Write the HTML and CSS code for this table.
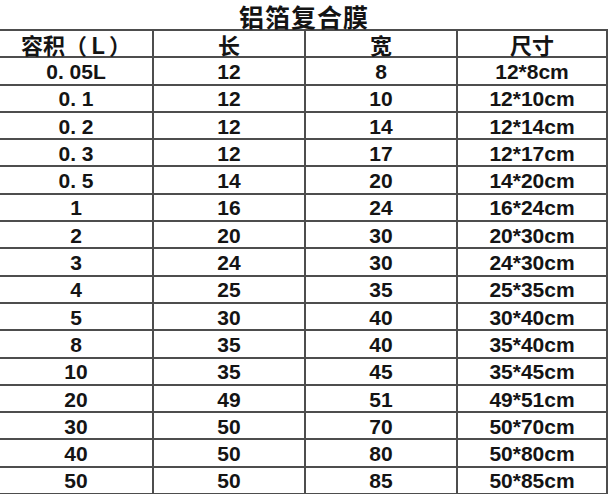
FILE: index.html
```html
<!DOCTYPE html>
<html lang="zh">
<head>
<meta charset="utf-8">
<title>铝箔复合膜</title>
<link rel="stylesheet" href="styles.css">
</head>
<body>
<div class="sheet">
  <div class="title">铝箔复合膜</div>
  <div class="grid">
    <div class="c h">容积（Ｌ）</div><div class="c h">长</div><div class="c h">宽</div><div class="c h">尺寸</div>
    <div class="c">0. 05L</div><div class="c">12</div><div class="c">8</div><div class="c">12*8cm</div>
    <div class="c">0. 1</div><div class="c">12</div><div class="c">10</div><div class="c">12*10cm</div>
    <div class="c">0. 2</div><div class="c">12</div><div class="c">14</div><div class="c">12*14cm</div>
    <div class="c">0. 3</div><div class="c">12</div><div class="c">17</div><div class="c">12*17cm</div>
    <div class="c">0. 5</div><div class="c">14</div><div class="c">20</div><div class="c">14*20cm</div>
    <div class="c">1</div><div class="c">16</div><div class="c">24</div><div class="c">16*24cm</div>
    <div class="c">2</div><div class="c">20</div><div class="c">30</div><div class="c">20*30cm</div>
    <div class="c">3</div><div class="c">24</div><div class="c">30</div><div class="c">24*30cm</div>
    <div class="c">4</div><div class="c">25</div><div class="c">35</div><div class="c">25*35cm</div>
    <div class="c">5</div><div class="c">30</div><div class="c">40</div><div class="c">30*40cm</div>
    <div class="c">8</div><div class="c">35</div><div class="c">40</div><div class="c">35*40cm</div>
    <div class="c">10</div><div class="c">35</div><div class="c">45</div><div class="c">35*45cm</div>
    <div class="c">20</div><div class="c">49</div><div class="c">51</div><div class="c">49*51cm</div>
    <div class="c">30</div><div class="c">50</div><div class="c">70</div><div class="c">50*70cm</div>
    <div class="c">40</div><div class="c">50</div><div class="c">80</div><div class="c">50*80cm</div>
    <div class="c">50</div><div class="c">50</div><div class="c">85</div><div class="c">50*85cm</div>
  </div>
</div>
</body>
</html>
```

FILE: styles.css
```css
html, body {
  margin: 0;
  padding: 0;
  background: #ffffff;
}
body {
  width: 609px;
  height: 494px;
  overflow: hidden;
  font-family: "Liberation Sans", "Noto Sans CJK SC", sans-serif;
  font-weight: bold;
  color: #141414;
}
.sheet {
  width: 609px;
}
.title {
  width: 608px;
  height: 29px;
  box-sizing: border-box;
  padding-top: 3px;
  line-height: 26px;
  text-align: center;
  font-family: "Noto Sans CJK SC", sans-serif;
  font-size: 25px;
  font-weight: bold;
  letter-spacing: 1px;
}
.grid {
  display: grid;
  grid-template-columns: 152px 152px 152px 150px;
  grid-auto-rows: 27.3px;
  width: 606px;
  border-top: 2px solid #4d4d4d;
  border-right: 2px solid #4d4d4d;
}
.c {
  display: flex;
  align-items: center;
  justify-content: center;
  border-bottom: 2px solid #4d4d4d;
  border-left: 2px solid #4d4d4d;
  font-size: 21px;
  box-sizing: border-box;
  padding-top: 2px;
}
.c:nth-child(4n+1) {
  border-left: none;
}
.h {
  font-family: "Noto Sans CJK SC", sans-serif;
  font-size: 22px;
  padding-top: 0;
}
```
